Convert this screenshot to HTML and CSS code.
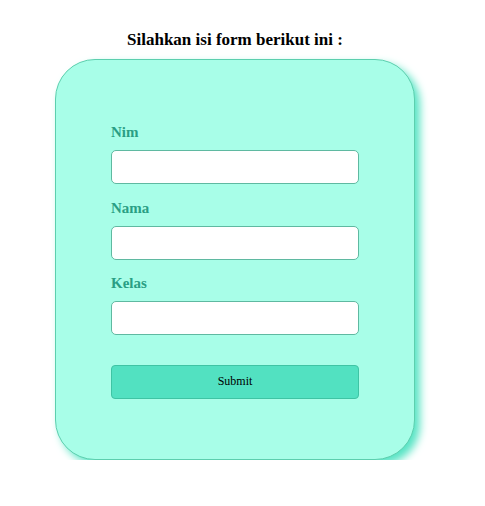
FILE: index.html
```html
<!DOCTYPE html>
<html lang="id">
<head>
  <meta charset="UTF-8">
  <title>Form</title>
  <link rel="stylesheet" href="styles.css">
</head>
<body>
  <div class="wrap">
    <h3 class="title">Silahkan isi form berikut ini :</h3>

    <!-- ===== FORM CARD ===== -->
    <form class="card">
      <label for="nim">Nim</label>
      <input type="text" id="nim" name="nim">

      <label for="nama">Nama</label>
      <input type="text" id="nama" name="nama">

      <label for="kelas">Kelas</label>
      <input type="text" id="kelas" name="kelas">

      <button type="submit" class="btn">Submit</button>
    </form>
  </div>
</body>
</html>
```

FILE: styles.css
```css
body {
  margin: 0;
  background: #fff;
  font-family: "Liberation Serif", "Times New Roman", serif;
}

.wrap { width: 360px; margin-left: 55px; }

.title {
  margin: 0 0 9px;
  padding-top: 30px;
  font-size: 17px;
  line-height: 20px;
  font-weight: bold;
  text-align: center;
  color: #000;
}

/* ---------- card ---------- */
.card {
  display: flex;
  flex-direction: column;
  padding: 64px 55px 60px;
  background: #a8fee8;
  border: 1px solid #5ccfae;
  border-radius: 40px;
  box-shadow: 5px 5px 8px #56e4c4;
}

.card label {
  font-size: 15px;
  line-height: 17px;
  font-weight: bold;
  color: #2a9e84;
  margin-bottom: 9px;
}

.card input {
  box-sizing: border-box;
  height: 34px;
  margin: 0 0 15.5px;
  border: 1px solid #5fb9a1;
  border-radius: 5px;
  background: #fff;
}

.btn {
  margin-top: 14px;
  height: 34px;
  background: #52e1c1;
  border: 1px solid #3fc4a4;
  border-radius: 4px;
  font-family: "Liberation Serif", "Times New Roman", serif;
  font-size: 12px;
  color: #000;
}
```
